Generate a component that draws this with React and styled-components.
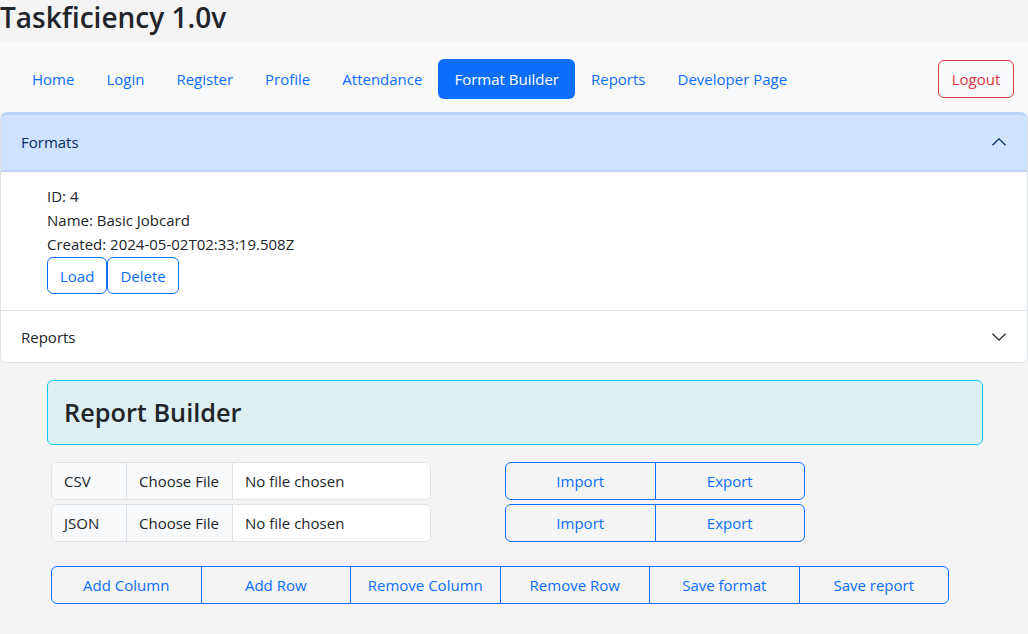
import styled, { createGlobalStyle } from "styled-components";

const Global = createGlobalStyle`
    body {
        margin: 0;
        background: #f4f4f4;
        font-family: "Open Sans", "Noto Sans", sans-serif;
        font-size: 15px;
        color: #212529;
    }
    * { box-sizing: border-box; }
`

const Title = styled.h1`
    margin: 0;
    height: 42px;
    font-size: 28px;
    font-weight: 600;
    line-height: 34px;
    color: #212529;
`

const NavBar = styled.nav`
    display: flex;
    align-items: center;
    justify-content: space-between;
    height: 70px;
    padding: 4px 14px 0 16px;
    background: #f8f9fa;
`

const Links = styled.div`
    display: flex;
`

const NavLink = styled.a`
    display: block;
    padding: 8px 16px;
    line-height: 24px;
    border-radius: 6px;
    text-decoration: none;
    cursor: pointer;
    color: ${(p) => (p.active ? "#ffffff" : "#0d6efd")};
    background: ${(p) => (p.active ? "#0d6efd" : "transparent")};
`

const LogoutButton = styled.button`
    font: inherit;
    height: 38px;
    width: 76px;
    color: #dc3545;
    background: transparent;
    border: 1px solid #dc3545;
    border-radius: 6px;
    cursor: pointer;
`

const Accordion = styled.div`
    background: #ffffff;
    border: 1px solid #dee2e6;
    border-top: none;
    border-radius: 6px;
`

const Item = styled.div`
    & + & {
        border-top: 1px solid #dee2e6;
    }
`

const ItemHeader = styled.div`
    display: flex;
    align-items: center;
    justify-content: space-between;
    height: ${(p) => (p.open ? "60px" : "51px")};
    padding: ${(p) => (p.open ? "0 20px 4px" : "0 20px")};
    color: ${(p) => (p.open ? "#052c65" : "#212529")};
    background: ${(p) => (p.open ? "#cfe2ff" : "#ffffff")};
    border-top: ${(p) => (p.open ? "3px solid #b8d2fa" : "none")};
    border-radius: ${(p) => (p.open ? "6px 6px 0 0" : "0 0 6px 6px")};
    box-shadow: ${(p) => (p.open ? "inset 0 -2px 0 #bdd5f9" : "none")};
`

const ItemBody = styled.div`
    padding: 12px 20px 16px 46px;
    line-height: 24px;
`

const SmallGroup = styled.div`
    display: flex;
    margin-top: 1px;
`

const OutlineButton = styled.button`
    font: inherit;
    height: 37px;
    padding: 0 12px;
    color: #0d6efd;
    background: transparent;
    border: 1px solid #0d6efd;
    border-radius: 6px;
    cursor: pointer;
`

const Container = styled.div`
    width: 936px;
    margin: 17px 0 0 47px;
`

const Alert = styled.div`
    height: 65px;
    padding: 15px 16px;
    background: #dcf0f3;
    border: 1px solid #0dcaf0;
    border-radius: 6px;
    & h2 {
        margin: 0;
        font-size: 25.3px;
        font-weight: 600;
        line-height: 33px;
        color: #212529;
    }
`

const FileRows = styled.div`
    display: flex;
    flex-direction: column;
    gap: 4px;
    margin: 17px 0 0 4px;
`

const FileRow = styled.div`
    display: flex;
    gap: 74px;
`

const InputGroup = styled.div`
    display: flex;
    width: 380px;
    height: 38px;
    border: 1px solid #dee2e6;
    border-radius: 6px;
    overflow: hidden;
    background: #ffffff;
`

const Cell = styled.div`
    display: flex;
    align-items: center;
    width: ${(p) => p.w};
    flex: ${(p) => (p.w ? "none" : "1")};
    padding: 0 12px;
    background: ${(p) => (p.plain ? "#ffffff" : "#f8f9fa")};
    border-left: ${(p) => (p.first ? "none" : "1px solid #dee2e6")};
    white-space: nowrap;
`

const ButtonGroup = styled.div`
    display: flex;
    width: ${(p) => p.w};
    height: 38px;
    border: 1px solid #0d6efd;
    border-radius: 6px;
    overflow: hidden;
`

const GroupButton = styled.button`
    flex: 1;
    font: inherit;
    padding: 0;
    color: #0d6efd;
    background: transparent;
    border: none;
    border-left: 1px solid #0d6efd;
    cursor: pointer;
    &:first-child {
        border-left: none;
    }
`

const Toolbar = styled.div`
    margin: 24px 0 0 4px;
`

function Chevron({ up }) {
    return (
        <svg width="16" height="16" viewBox="0 0 16 16" fill="none"
            stroke={up ? "#052c65" : "#212529"} strokeWidth="1.3"
            style={{ transform: up ? "rotate(180deg)" : "none" }}>
            <path d="M1.5 4.8L8 11.2L14.5 4.8" />
        </svg>
    );
}

const links = ["Home", "Login", "Register", "Profile", "Attendance", "Format Builder", "Reports", "Developer Page"];
const tools = ["Add Column", "Add Row", "Remove Column", "Remove Row", "Save format", "Save report"];

export default function App() {
    return (
        <>
            <Global />
            <Title>Taskficiency 1.0v</Title>
            <NavBar>
                <Links>
                    {links.map((l) => (
                        <NavLink key={l} active={l === "Format Builder"}>{l}</NavLink>
                    ))}
                </Links>
                <LogoutButton>Logout</LogoutButton>
            </NavBar>
            <Accordion>
                <Item>
                    <ItemHeader open>
                        <span>Formats</span>
                        <Chevron up />
                    </ItemHeader>
                    <ItemBody>
                        <div>ID: 4</div>
                        <div>Name: Basic Jobcard</div>
                        <div>Created: 2024-05-02T02:33:19.508Z</div>
                        <SmallGroup>
                            <OutlineButton>Load</OutlineButton>
                            <OutlineButton>Delete</OutlineButton>
                        </SmallGroup>
                    </ItemBody>
                </Item>
                <Item>
                    <ItemHeader>
                        <span>Reports</span>
                        <Chevron />
                    </ItemHeader>
                </Item>
            </Accordion>
            <Container>
                <Alert><h2>Report Builder</h2></Alert>
                <FileRows>
                    {["CSV", "JSON"].map((t) => (
                        <FileRow key={t}>
                            <InputGroup>
                                <Cell first w="74px">{t}</Cell>
                                <Cell w="106px">Choose File</Cell>
                                <Cell plain>No file chosen</Cell>
                            </InputGroup>
                            <ButtonGroup w="300px">
                                <GroupButton>Import</GroupButton>
                                <GroupButton>Export</GroupButton>
                            </ButtonGroup>
                        </FileRow>
                    ))}
                </FileRows>
                <Toolbar>
                    <ButtonGroup w="898px">
                        {tools.map((t) => (
                            <GroupButton key={t}>{t}</GroupButton>
                        ))}
                    </ButtonGroup>
                </Toolbar>
            </Container>
        </>
    );
}
